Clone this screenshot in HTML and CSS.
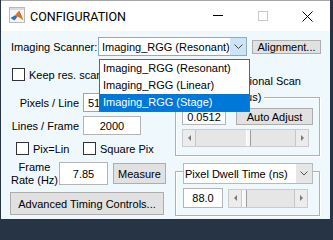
FILE: index.html
```html
<!DOCTYPE html>
<html>
<head>
<meta charset="utf-8">
<title>CONFIGURATION</title>
<link rel="stylesheet" href="styles.css">
</head>
<body>
<div class="window">
  <div class="titlebar">
    <svg class="app-icon" width="16" height="16" viewBox="0 0 16 16">
      <rect x="0.5" y="0.5" width="15" height="15" fill="#f6f6f6" stroke="#b9b9b9"/>
      <rect x="1" y="1" width="14" height="2" fill="#dcdcdc"/>
      <path d="M1.5 11 L6 8.2 L8.6 9.8 L5.4 13.6 Z" fill="#2f72b6"/>
      <path d="M6 8.2 L10.2 3.6 L14.4 13.4 L11.6 11.2 L8.6 9.8 Z" fill="#e8701e"/>
      <path d="M10.2 3.6 L11.4 7.4 L14.4 13.4 Z" fill="#b83a16"/>
    </svg>
    <span class="title">CONFIGURATION</span>
    <div class="caption">
      <span class="cap"><svg width="10" height="10" viewBox="0 0 10 10"><line x1="0" y1="4.5" x2="10" y2="4.5" stroke="#000" stroke-width="1"/></svg></span>
      <span class="cap"><svg width="10" height="10" viewBox="0 0 10 10"><rect x="0.5" y="0.5" width="9" height="9" fill="none" stroke="#c9c9c9"/></svg></span>
      <span class="cap"><svg width="11" height="11" viewBox="0 0 11 11"><path d="M0.5 0.5 L10.5 10.5 M10.5 0.5 L0.5 10.5" stroke="#000" stroke-width="1" fill="none"/></svg></span>
    </div>
  </div>
  <div class="client">
    <div class="scanner-row">
      <span class="scanner-label">Imaging Scanner:</span>
      <div class="combo combo-scanner">
        <span class="combo-text">Imaging_RGG (Resonant)</span>
        <span class="combo-arrow"><svg width="9" height="5" viewBox="0 0 9 5"><path d="M0.5 0.5 L4.5 4.5 L8.5 0.5" fill="none" stroke="#444"/></svg></span>
        <ul class="combo-list">
          <li>Imaging_RGG (Resonant)</li>
          <li>Imaging_RGG (Linear)</li>
          <li class="selected">Imaging_RGG (Stage)</li>
        </ul>
      </div>
      <button class="btn btn-align">Alignment...</button>
    </div>
    <div class="main">
      <div class="col-left">
        <label class="chk chk-keep"><span class="box"></span><span>Keep res. scan settings</span></label>
        <div class="field-row row-pixels">
          <span class="field-label">Pixels / Line</span>
          <div class="combo combo-pixels">
            <span class="combo-text">512</span>
            <span class="combo-arrow"><svg width="9" height="5" viewBox="0 0 9 5"><path d="M0.5 0.5 L4.5 4.5 L8.5 0.5" fill="none" stroke="#444"/></svg></span>
          </div>
        </div>
        <div class="field-row row-lines">
          <span class="field-label">Lines / Frame</span>
          <input class="edit edit-lines" value="2000" readonly>
        </div>
        <div class="check-row">
          <label class="chk chk-pixlin"><span class="box"></span><span>Pix=Lin</span></label>
          <label class="chk"><span class="box"></span><span>Square Pix</span></label>
        </div>
        <div class="frame-row">
          <span class="frame-label">Frame<br>Rate (Hz)</span>
          <input class="edit edit-rate" value="7.85" readonly>
          <button class="btn btn-measure">Measure</button>
        </div>
        <button class="btn btn-advanced">Advanced Timing Controls...</button>
      </div>
      <div class="col-right">
        <label class="chk chk-bidi"><span class="box"></span><span>Bidirectional Scan</span></label>
        <div class="group group-phase">
          <span class="group-title">Scan Phase (us)</span>
          <div class="group-row row-phase">
            <input class="edit edit-phase" value="0.0512" readonly>
            <button class="btn btn-auto">Auto Adjust</button>
          </div>
          <div class="slider slider-phase">
            <span class="sb-btn sb-left"><i class="tri tri-left"></i></span>
            <span class="sb-track"><span class="sb-thumb" style="margin-left:50px"></span></span>
            <span class="sb-btn sb-right"><i class="tri tri-right"></i></span>
          </div>
        </div>
        <div class="group group-dwell">
          <div class="combo combo-dwell">
            <span class="combo-text">Pixel Dwell Time (ns)</span>
            <span class="combo-arrow"><svg width="8" height="5" viewBox="0 0 8 5"><path d="M0.5 0.5 L4 4 L7.5 0.5" fill="none" stroke="#555"/></svg></span>
          </div>
          <div class="group-row row-dwell">
            <input class="edit edit-dwell" value="88.0" readonly>
            <div class="slider slider-dwell">
              <span class="sb-btn sb-left"><i class="tri tri-left"></i></span>
              <span class="sb-track"><span class="sb-thumb" style="margin-left:0px"></span></span>
              <span class="sb-btn sb-right"><i class="tri tri-right"></i></span>
            </div>
          </div>
        </div>
      </div>
    </div>
  </div>
</div>
</body>
</html>
```

FILE: styles.css
```css
* { box-sizing: border-box; }
html, body { margin: 0; padding: 0; }
body {
  width: 333px;
  height: 223px;
  overflow: hidden;
  background: #263445;
  font-family: "Liberation Sans", Arial, sans-serif;
  font-size: 11px;
  color: #000;
}
.window {
  margin-left: 1px;
  width: 329px;
  height: 219px;
  background: #eff8fd;
  border-top: 1px solid #a6a6a6;
  display: flex;
  flex-direction: column;
}
.titlebar {
  flex: none;
  height: 30px;
  background: #fff;
  display: flex;
  align-items: center;
}
.app-icon { flex: none; margin-left: 8px; margin-top: -2px; }
.title {
  margin-left: 5px;
  font-family: Roboto, "Liberation Sans", sans-serif;
  font-size: 12.5px;
}
.caption { margin-left: auto; display: flex; align-self: stretch; }
.cap { width: 45px; display: flex; align-items: center; justify-content: center; }

.client { flex: 1; display: flex; flex-direction: column; padding-left: 9px; }

.scanner-row { margin-top: 6px; height: 19px; display: flex; align-items: center; }
.scanner-label { width: 88px; padding-left: 1px; white-space: nowrap; }

.combo {
  position: relative;
  display: flex;
  align-items: center;
  background: #fff;
  border: 1px solid #a4a4a4;
}
.combo-text { flex: 1; padding-left: 3px; white-space: nowrap; overflow: hidden; }
.combo-arrow {
  flex: none;
  align-self: stretch;
  width: 16px;
  display: flex;
  align-items: center;
  justify-content: center;
}
.combo-scanner { width: 149px; height: 19px; border-color: #8fa9c4; }
.combo-scanner .combo-arrow { background: #cce4f7; }
.combo-list {
  position: absolute;
  left: 0;
  top: 21px;
  width: 151px;
  margin: 0;
  padding: 0;
  list-style: none;
  background: #fff;
  border: 1px solid #646464;
  z-index: 5;
}
.combo-list li { height: 17px; line-height: 17px; padding-left: 3px; white-space: nowrap; }
.combo-list li.selected { background: #0078d7; color: #fff; }

.btn {
  font: inherit;
  color: #000;
  background: #e1e1e1;
  border: 1px solid #adadad;
  padding: 0;
  margin: 0;
  text-align: center;
  white-space: nowrap;
}
.btn-align { margin-left: 5px; width: 69px; height: 14px; line-height: 12px; }

.edit {
  font: inherit;
  color: #000;
  background: #fff;
  border: 1px solid #b4b4b4;
  padding: 0;
  margin: 0;
  text-align: center;
  outline: none;
}

.main { display: flex; align-items: flex-start; }
.col-left { width: 156px; display: flex; flex-direction: column; }
.col-right { margin-left: 9px; width: 145px; display: flex; flex-direction: column; }

.chk { display: flex; align-items: center; height: 13px; white-space: nowrap; }
.box {
  flex: none;
  width: 13px;
  height: 13px;
  background: #fff;
  border: 1px solid #333;
  margin-right: 4px;
}
.chk-keep { margin-top: 12px; margin-left: 2px; }

.field-row { display: flex; align-items: center; }
.field-label { width: 69px; text-align: right; white-space: nowrap; }
.row-pixels { margin-top: 12px; }
.combo-pixels { margin-left: 4px; width: 58px; height: 19px; }
.combo-pixels .combo-text { padding-left: 4px; }
.row-lines { margin-top: 4px; }
.edit-lines { margin-left: 4px; width: 58px; height: 19px; }

.check-row { margin-top: 7px; display: flex; }
.chk-pixlin { margin-left: 6px; width: 67px; }

.frame-row { margin-top: 7px; display: flex; align-items: center; height: 23px; }
.frame-label { width: 49px; text-align: center; line-height: 13px; }
.edit-rate { width: 49px; height: 23px; }
.btn-measure { margin-left: 5px; width: 53px; height: 21px; }
.btn-advanced { margin-top: 7px; width: 154px; height: 23px; }

.chk-bidi { margin-top: 18px; align-self: flex-end; margin-right: 19px; }

.group {
  border: 1px solid #aab1b8;
  box-shadow: inset 1px 1px 0 #fff, 1px 1px 0 #fff;
  display: flex;
  flex-direction: column;
}
.group-phase { margin-top: 10px; padding: 0 6px 8px; }
.group-title {
  align-self: flex-start;
  margin-top: -7px;
  margin-left: -4px;
  height: 13px;
  line-height: 13px;
  padding: 0 3px 0 2px;
  background: #eff8fd;
  white-space: nowrap;
}
.group-row { display: flex; align-items: center; }
.row-phase { margin-top: 4px; }
.edit-phase { width: 44px; height: 17px; }
.btn-auto { margin-left: 10px; width: 77px; height: 17px; }

.slider { display: flex; background: #e6e6e6; border: 1px solid #cbcbcb; }
.slider-phase { margin-top: 4px; width: 127px; height: 18px; }
.sb-btn {
  flex: none;
  width: 13px;
  display: flex;
  align-items: center;
  justify-content: center;
  background: #ececec;
}
.sb-left { border-right: 1px solid #c6c6c6; }
.sb-right { border-left: 1px solid #c6c6c6; }
.sb-track { flex: 1; display: flex; }
.sb-thumb {
  flex: none;
  width: 5px;
  background: #f7f7f7;
  border-left: 1px solid #fff;
  border-right: 1px solid #9d9d9d;
}
.tri { display: block; width: 0; height: 0; border-top: 3px solid transparent; border-bottom: 3px solid transparent; }
.tri-left { border-right: 3px solid #7b7b7b; }
.tri-right { border-left: 3px solid #7b7b7b; }

.group-dwell { margin-top: 15px; padding: 0 6px 7px 7px; }
.combo-dwell { margin-top: -9px; width: 130px; height: 21px; border-color: #b9b9b9; }
.combo-dwell .combo-text { padding-left: 1px; }
.combo-dwell .combo-arrow { background: #e6e6e6; }
.row-dwell { margin-top: 4px; }
.edit-dwell { width: 40px; height: 20px; }
.slider-dwell { margin-left: 5px; width: 80px; height: 19px; }
```
